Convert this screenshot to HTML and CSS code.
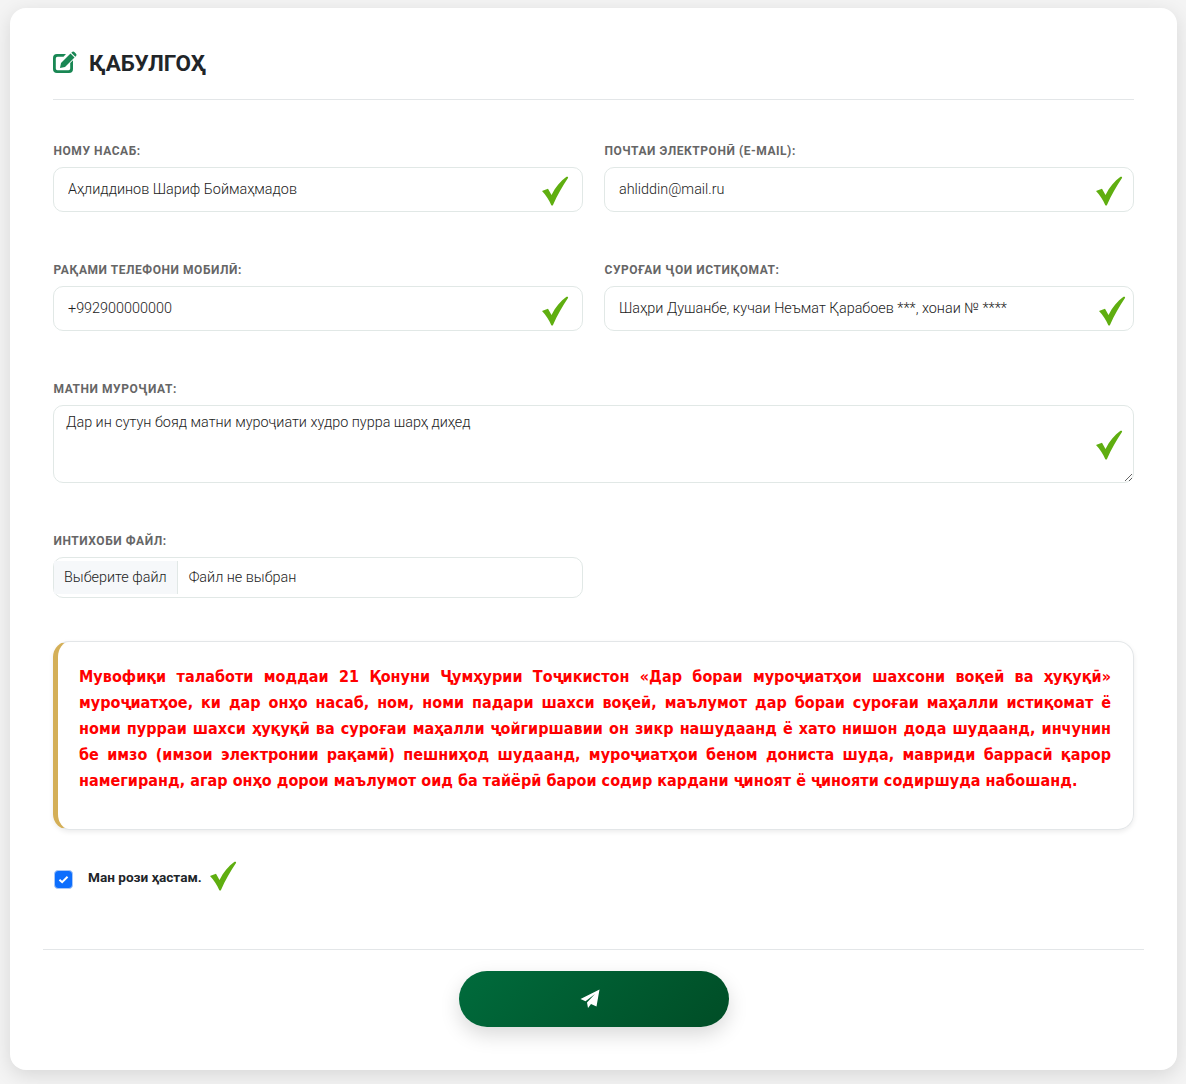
FILE: index.html
```html
<!DOCTYPE html>
<html lang="tg">
<head>
    <meta charset="UTF-8">
    <meta name="viewport" content="width=device-width, initial-scale=1.0">
    <title>Қабулгоҳ</title>
    <link rel="stylesheet" href="styles.css">
</head>
<body>
    <svg class="defs" width="0" height="0">
        <symbol id="tick" viewBox="0 0 28 30">
            <path d="M1 15 L7 12.700 L10.500 19 C14.500 11 19.500 5 25.500 .8 C26.500 .3 27.500 1 27 1.900 C22 9.500 16 19 12 29 C11.800 29.700 10.600 29.700 10.200 29 C8 24 5 19 1 15Z"/>
        </symbol>
    </svg>
    <div class="card">
        <div class="card-head">
            <svg class="head-icon" viewBox="0 0 24 22">
                <path d="M4 3H13L10.500 5.800H4.500A1.700 1.700 0 0 0 2.800 7.500V17.500A1.700 1.700 0 0 0 4.500 19.200H15.500A1.700 1.700 0 0 0 17.200 17.500V12L20 9.200V18A4 4 0 0 1 16 22H4A4 4 0 0 1 0 18V7A4 4 0 0 1 4 3Z"/>
                <path d="M17.500 2.500 21.500 6.500 12 16 7 17 8 12Z"/>
                <path d="M18.800 1.200a2 2 0 0 1 2.800 0l1.200 1.200a2 2 0 0 1 0 2.800l-.5.5-4-4Z"/>
            </svg>
            <h2>ҚАБУЛГОҲ</h2>
        </div>

        <form class="form-grid">
            <div class="field">
                <label>НОМУ НАСАБ:</label>
                <div class="control">
                    <input type="text" value="Аҳлиддинов Шариф Боймаҳмадов">
                    <svg class="tick tick-a"><use href="#tick"/></svg>
                </div>
            </div>
            <div class="field">
                <label>ПОЧТАИ ЭЛЕКТРОНӢ (E-MAIL):</label>
                <div class="control">
                    <input type="text" value="ahliddin@mail.ru">
                    <svg class="tick tick-b"><use href="#tick"/></svg>
                </div>
            </div>
            <div class="field">
                <label>РАҚАМИ ТЕЛЕФОНИ МОБИЛӢ:</label>
                <div class="control">
                    <input type="text" value="+992900000000">
                    <svg class="tick tick-a2"><use href="#tick"/></svg>
                </div>
            </div>
            <div class="field">
                <label>СУРОҒАИ ҶОИ ИСТИҚОМАТ:</label>
                <div class="control">
                    <input type="text" value="Шаҳри Душанбе, кучаи Неъмат Қарабоев ***, хонаи № ****">
                    <svg class="tick tick-c"><use href="#tick"/></svg>
                </div>
            </div>
            <div class="field wide">
                <label>МАТНИ МУРОҶИАТ:</label>
                <div class="control">
                    <textarea>Дар ин сутун бояд матни муроҷиати худро пурра шарҳ диҳед</textarea>
                    <svg class="tick tick-d"><use href="#tick"/></svg>
                </div>
            </div>
            <div class="field">
                <label>ИНТИХОБИ ФАЙЛ:</label>
                <div class="file-box">
                    <span class="file-btn">Выберите файл</span>
                    <span class="file-name">Файл не выбран</span>
                </div>
            </div>
        </form>

        <div class="notice">
            <p>Мувофиқи талаботи моддаи 21 Қонуни Ҷумҳурии Тоҷикистон «Дар бораи муроҷиатҳои шахсони воқеӣ ва ҳуқуқӣ» муроҷиатҳое, ки дар онҳо насаб, ном, номи падари шахси воқеӣ, маълумот дар бораи суроғаи маҳалли истиқомат ё номи пурраи шахси ҳуқуқӣ ва суроғаи маҳалли ҷойгиршавии он зикр нашудаанд ё хато нишон дода шудаанд, инчунин бе имзо (имзои электронии рақамӣ) пешниҳод шудаанд, муроҷиатҳои беном дониста шуда, мавриди баррасӣ қарор намегиранд, агар онҳо дорои маълумот оид ба тайёрӣ барои содир кардани ҷиноят ё ҷинояти содиршуда набошанд.</p>
        </div>

        <div class="agree">
            <span class="check-box">
                <svg viewBox="0 0 12 10"><path d="M1.500 5.200 4.500 8 10.500 2"/></svg>
            </span>
            <span class="agree-text">Ман рози ҳастам.</span>
            <svg class="agree-tick"><use href="#tick"/></svg>
        </div>

        <div class="card-foot">
            <button type="button" class="send-btn">
                <svg viewBox="0 0 20 20"><path d="M19.500 .5 16.500 17.500 11 15 8 19 7 13.500 15 5 5.500 12.200 .5 10Z"/></svg>
            </button>
        </div>
    </div>
</body>
</html>
```

FILE: styles.css
```css
* {
    margin: 0;
    padding: 0;
    box-sizing: border-box;
    font-family: 'Roboto', sans-serif;
}
body {
    background: #f4f4f4;
    padding: 8px 9px 14px 10px;
}
.defs {
    display: block;
    height: 0;
}
.card {
    background: #fff;
    border-radius: 16px;
    box-shadow: 0 5px 20px rgba(0, 0, 0, 0.12);
    height: 1062px;
    padding: 0 43px;
}
.card-head {
    display: flex;
    align-items: center;
    gap: 12px;
    height: 92px;
    padding-top: 18px;
    border-bottom: 1px solid #e3e6e8;
}
.head-icon {
    width: 24px;
    height: 22px;
    margin-top: -1px;
    fill: #198754;
}
.card-head h2 {
    font-size: 22.400px;
    font-weight: 700;
    color: #212529;
    line-height: 26px;
}
.form-grid {
    display: grid;
    grid-template-columns: 530px 530px;
    column-gap: 21px;
    row-gap: 50px;
    padding-top: 43px;
}
.wide {
    grid-column: 1 / 3;
}
.field label {
    display: block;
    font-size: 12px;
    font-weight: 700;
    letter-spacing: 0.550px;
    line-height: 16px;
    color: #666;
    margin-bottom: 8px;
    padding-left: 0.500px;
}
.control {
    position: relative;
}
.control input {
    display: block;
    width: 100%;
    height: 45px;
    padding: 0 14px;
    border: 1px solid #e1e8e6;
    border-radius: 10px;
    background: #fff;
    font-size: 14.400px;
    font-weight: 300;
    color: #222;
    outline: none;
}
.control textarea {
    display: block;
    width: 100%;
    height: 78px;
    padding: 8px 12px;
    border: 1px solid #e1e8e6;
    border-radius: 10px;
    font-size: 14.400px;
    font-weight: 300;
    line-height: 18px;
    color: #222;
    outline: none;
}
.tick {
    position: absolute;
    width: 28px;
    height: 30px;
    fill: #5fae10;
}
.tick-a { top: 9px; right: 14px; }
.tick-a2 { top: 10px; right: 14px; }
.tick-b { top: 9px; right: 11px; }
.tick-c { top: 10px; right: 8px; }
.tick-d { top: 25px; right: 11px; }
.file-box {
    display: flex;
    align-items: stretch;
    height: 41px;
    padding: 3px 0;
    border: 1px solid #e1e8e6;
    border-radius: 10px;
    font-size: 14.400px;
    font-weight: 300;
    color: #222;
}
.file-btn {
    display: flex;
    align-items: center;
    padding: 0 10px 0 10px;
    background: #f6f8fa;
    border-right: 1px solid #e1e8e6;
}
.file-name {
    display: flex;
    align-items: center;
    padding: 0 0 0 11px;
}
.notice {
    height: 189px;
    margin-top: 43px;
    padding: 22px 22px 0 21px;
    border: 1px solid #e3e6e8;
    border-left: 5px solid #d4af57;
    border-radius: 16px;
    box-shadow: 0 2px 5px rgba(0, 0, 0, 0.08);
}
.notice p {
    font-family: 'DejaVu Sans', sans-serif;
    font-stretch: condensed;
    font-size: 16px;
    font-weight: 700;
    letter-spacing: 0.030px;
    line-height: 26px;
    color: #ff0000;
    text-align: justify;
}
.agree {
    display: flex;
    align-items: flex-start;
    height: 119px;
    padding-top: 31px;
}
.check-box {
    display: flex;
    align-items: center;
    justify-content: center;
    width: 19px;
    height: 19px;
    margin: 9px 0 0 1px;
    background: #0d6efd;
    border-radius: 4px;
    border: 1px solid #a9c8f7;
}
.check-box svg {
    width: 11px;
    height: 9px;
    fill: none;
    stroke: #fff;
    stroke-width: 2.2;
}
.agree-text {
    margin: 8px 0 0 15px;
    font-size: 13.600px;
    font-weight: 700;
    line-height: 16px;
    color: #212529;
}
.agree-tick {
    width: 28px;
    height: 30px;
    margin: 0 0 0 7px;
    fill: #5fae10;
}
.card-foot {
    display: flex;
    justify-content: center;
    margin: 0 -10px;
    padding-top: 21px;
    border-top: 1px solid #e3e6e8;
}
.send-btn {
    display: flex;
    align-items: center;
    justify-content: center;
    width: 270px;
    height: 56px;
    border: none;
    border-radius: 28px;
    background: linear-gradient(135deg, #006b3c, #004d26);
    box-shadow: 0 8px 20px rgba(0, 0, 0, 0.15);
}
.send-btn svg {
    width: 20px;
    height: 20px;
    margin: 0 8px 0 0;
    fill: #fff;
}
```
